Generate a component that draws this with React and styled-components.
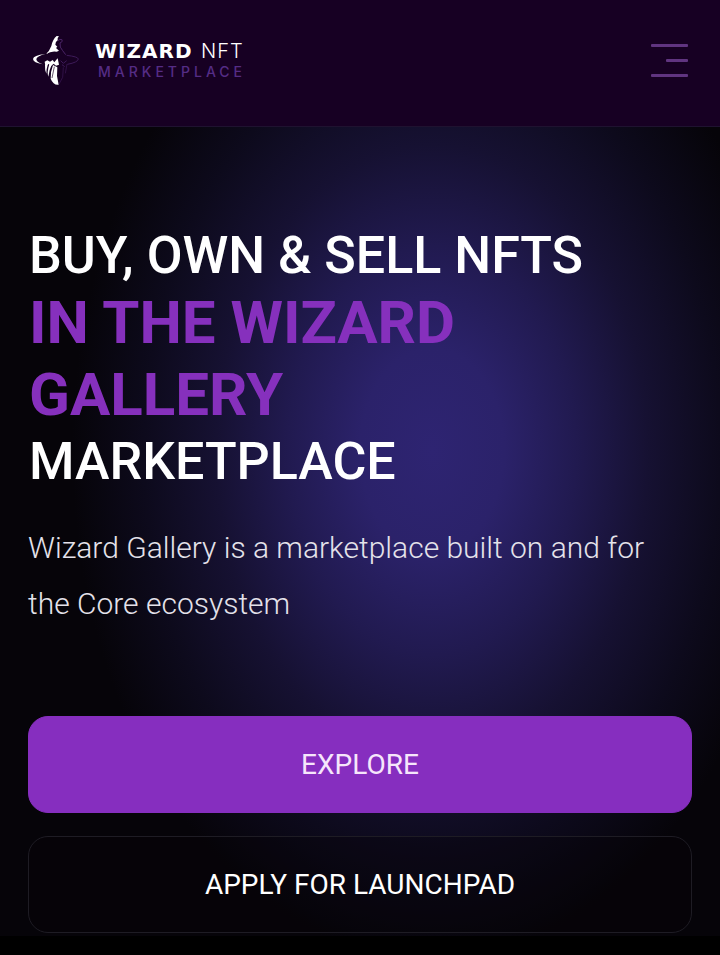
import React from "react";
import styled, { createGlobalStyle } from "styled-components";

const GlobalStyle = createGlobalStyle`
  * {
    box-sizing: border-box;
  }

  body {
    margin: 0;
    background: #000;
    color: #fff;
    font-family: Roboto, "Liberation Sans", sans-serif;
  }
`;

const Header = styled.header`
  display: flex;
  align-items: center;
  justify-content: space-between;
  min-height: 127px;
  padding: 0 32px 6px;
  background: #170023;
  border-bottom: 1px solid #1f1230;
`;

const Brand = styled.a`
  display: flex;
  align-items: center;
  gap: 15px;
  padding-top: 2px;
  color: #fff;
  text-decoration: none;
`;

const WizardMark = styled.svg`
  width: 48px;
  height: 52px;
`;

const BrandText = styled.span`
  display: flex;
  flex-direction: column;
  font-family: Inter, "DejaVu Sans", sans-serif;
`;

const BrandName = styled.span`
  font-size: 20px;
  line-height: 22px;
  font-weight: 300;
  letter-spacing: 1px;

  strong {
    margin-right: 2px;
    font-family: "DejaVu Sans", sans-serif;
    font-weight: 700;
  }
`;

const BrandSub = styled.span`
  padding-left: 3px;
  font-size: 14px;
  line-height: 20px;
  font-weight: 500;
  letter-spacing: 4px;
  color: #552c85;
`;

const MenuButton = styled.button`
  display: flex;
  flex-direction: column;
  align-items: flex-end;
  gap: 12px;
  padding: 0;
  border: 0;
  background: none;
  cursor: pointer;
`;

const MenuLine = styled.span`
  width: ${(props) => (props.$short ? "22px" : "37px")};
  height: 3px;
  border-radius: 1px;
  background: #603480;
`;

const Hero = styled.main`
  padding: 98px 28px 3px;
  background:
    radial-gradient(
      ellipse 360px 510px at 60% 40%,
      #2e2472 0%,
      #2b226a 20%,
      #211a50 40%,
      #161132 60%,
      #0d0a1c 80%,
      #060409 100%
    )
    #060409;
`;

const Title = styled.h1`
  margin: 0;
  padding-left: 1px;
  font-size: 52px;
  line-height: 1.2;
  font-weight: 500;
  text-transform: uppercase;
`;

const Highlight = styled.span`
  display: block;
  font-size: 60px;
  font-weight: 700;
  color: #8630bd;
`;

const Intro = styled.p`
  margin: 26px 0 84px;
  font-size: 30px;
  line-height: 56px;
  font-weight: 300;
  color: #e4e2ea;
`;

const Actions = styled.div`
  display: flex;
  flex-direction: column;
  gap: 23px;
`;

const Action = styled.button`
  width: 100%;
  min-height: 97px;
  border: 1px solid ${(props) => (props.$primary ? "#862ebf" : "#1e1c24")};
  border-radius: 20px;
  background: ${(props) => (props.$primary ? "#862ebf" : "rgba(5, 3, 8, 0.3)")};
  color: ${(props) => (props.$primary ? "#f6e6fb" : "#fff")};
  font-family: inherit;
  font-size: 28px;
  text-transform: uppercase;
  cursor: pointer;
`;

const Wizard = () => (
  <WizardMark viewBox="36 27 144 156" aria-hidden="true">
    {/* hat */}
    <path
      d="M78 84Q88 76 94 60Q98 40 110 30L117 31Q110 37 113 43Q106 47 106 56L112 62L108 66L117 74L110 77Q94 74 78 84Z"
      fill="#fff"
    />
    <path
      d="M114 44Q119 38 126 41Q130 47 120 51Q118 64 128 74L137 86"
      fill="none"
      stroke="#4a2466"
      strokeWidth="3"
    />
    {/* brim */}
    <path
      d="M76 84Q40 88 39 99Q40 110 68 115Q48 107 49 99Q52 90 76 84Z"
      fill="#fff"
    />
    <path
      d="M140 88Q174 92 175 99Q174 109 142 115"
      fill="none"
      stroke="#3d1a58"
      strokeWidth="3"
    />
    {/* face */}
    <path
      d="M74 107L82 103L90 107L98 102L103 109L109 101L113 97L117 116L108 119L101 113L94 119L86 114L76 120Z"
      fill="#fff"
    />
    <path
      d="M122 104L130 112L140 104M126 116L134 122"
      fill="none"
      stroke="#3d1a58"
      strokeWidth="3"
    />
    {/* beard */}
    <path
      d="M75 117L84 113L80 130L79 143Q74 132 75 117ZM88 114L97 112L89 132L85 152Q80 141 88 114ZM99 117L112 124L111 150L116 176Q100 178 92 158Q91 138 99 117Z"
      fill="#fff"
    />
    <path
      d="M103 122L96 156"
      fill="none"
      stroke="#170023"
      strokeWidth="2"
    />
    <path
      d="M141 114L136 142M130 124L128 154L117 174"
      fill="none"
      stroke="#3d1a58"
      strokeWidth="2"
    />
  </WizardMark>
);

const App = () => (
  <>
    <GlobalStyle />
    <Header>
      <Brand href="#" aria-label="Wizard NFT Marketplace">
        <Wizard />
        <BrandText>
          <BrandName>
            <strong>WIZARD</strong> NFT
          </BrandName>
          <BrandSub>MARKETPLACE</BrandSub>
        </BrandText>
      </Brand>
      <MenuButton type="button" aria-label="Open menu">
        <MenuLine />
        <MenuLine $short />
        <MenuLine />
      </MenuButton>
    </Header>
    <Hero>
      <Title>
        Buy, own &amp; sell NFTs
        <Highlight>in the Wizard Gallery</Highlight>
        Marketplace
      </Title>
      <Intro>
        Wizard Gallery is a marketplace built on and for the Core ecosystem
      </Intro>
      <Actions>
        <Action type="button" $primary>
          Explore
        </Action>
        <Action type="button">Apply for launchpad</Action>
      </Actions>
    </Hero>
  </>
);

export default App;
